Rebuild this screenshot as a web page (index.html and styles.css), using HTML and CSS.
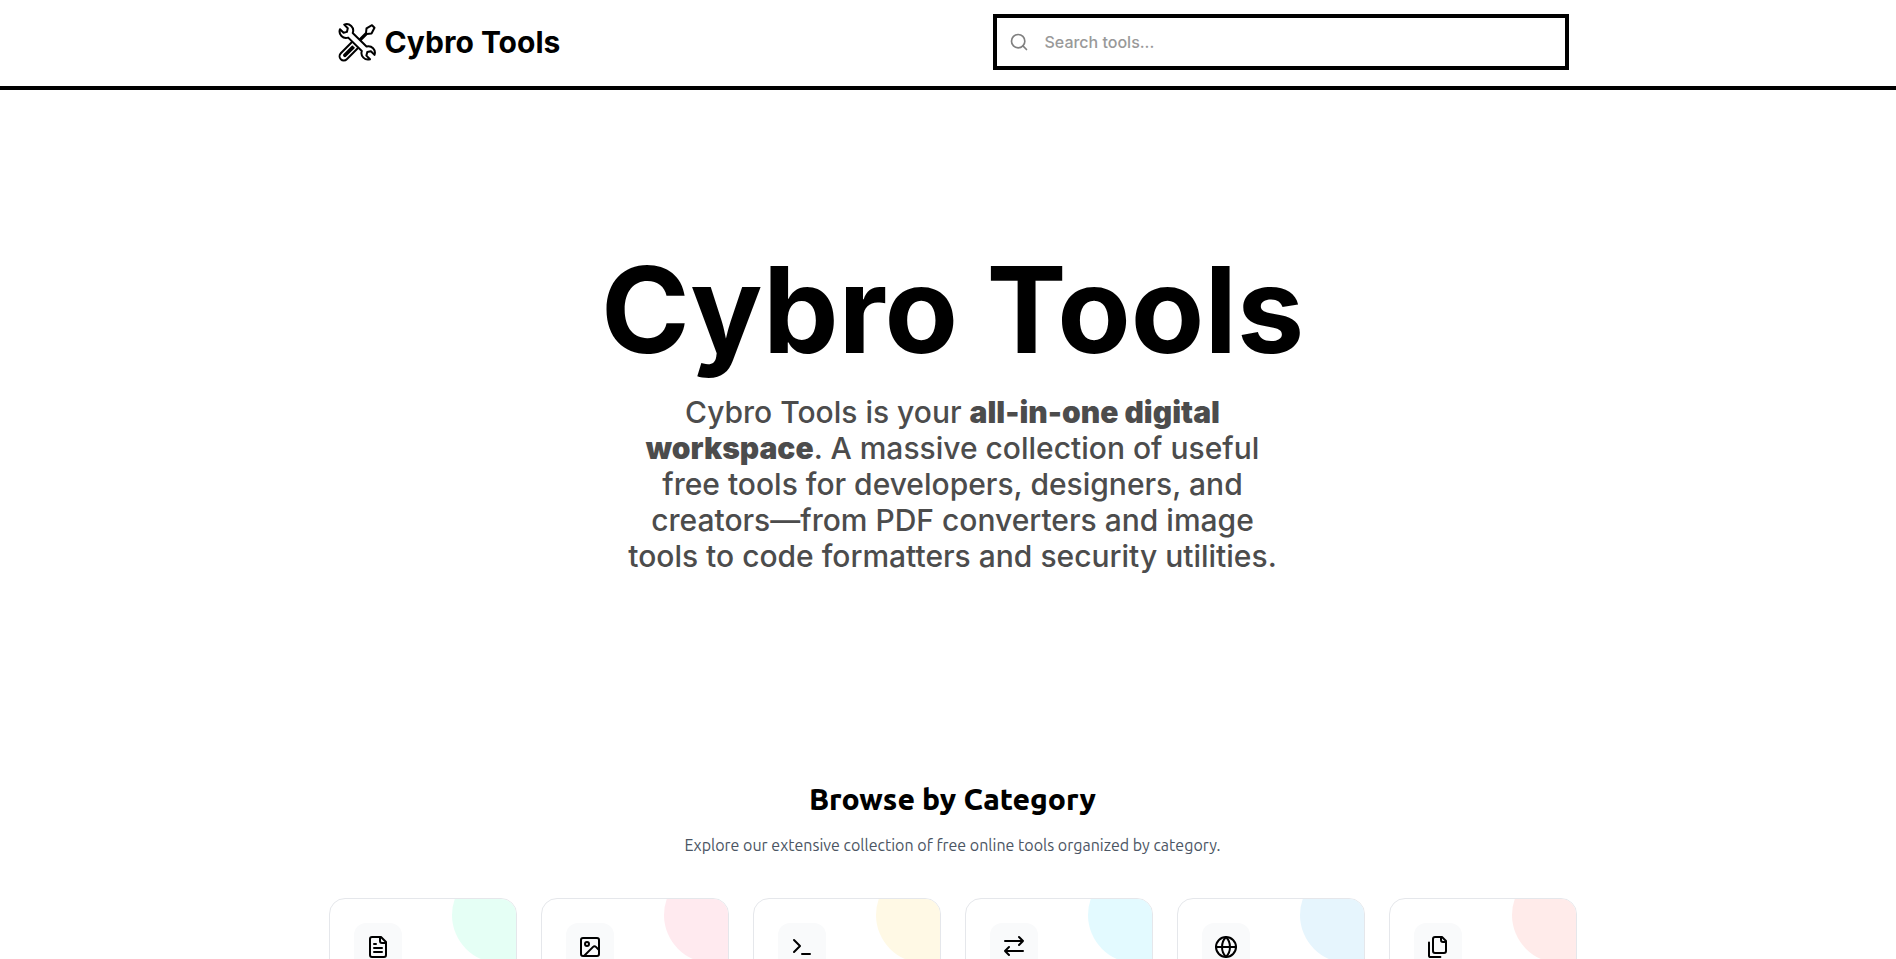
FILE: index.html
```html
<!DOCTYPE html>
<html lang="en">
<head>
<meta charset="utf-8">
<title>Cybro Tools</title>
<link rel="stylesheet" href="styles.css">
</head>
<body>
<header class="header">
  <div class="header-inner">
    <a class="brand" href="#">
      <svg class="brand-logo" viewBox="0 0 40 40" aria-hidden="true">
        <path d="M22.500 17.500 29 11l.5-4.600 5.500-3.200 2.500 2.500-3 5.800-4.700.5-6.500 6.500"/>
        <path d="M14.500 20.500 3.800 31.200a4.300 4.300 0 0 0 0 6 4.300 4.300 0 0 0 6 0L20.500 26.500"/>
        <path d="M15.500 24.500 7.300 32.700a.8.8 0 0 0 1.200 1.200L16.700 25.700"/>
        <path class="wrench" d="M7.200 2.600a6.500 6.500 0 0 1 8.500 8.400L29.500 24.500a6.500 6.500 0 0 1 8 8.400l-3.600-3.600-3.600.8-.9 3.500 3.600 3.600a6.500 6.500 0 0 1-8.200-8.200L11.200 15.600A6.500 6.500 0 0 1 3 7.200l3.600 3.600 3.300-.9.900-3.600z"/>
      </svg>
      <span>Cybro Tools</span>
    </a>
    <label class="search">
      <svg class="search-icon" viewBox="0 0 24 24" aria-hidden="true"><circle cx="11" cy="11" r="8"/><path d="m21 21-4.300-4.300"/></svg>
      <input class="search-input" type="text" placeholder="Search tools..." aria-label="Search tools">
    </label>
  </div>
</header>
<main class="main">
  <section class="hero">
    <h1 class="hero-title">Cybro Tools</h1>
    <p class="hero-text">Cybro Tools is your <strong>all-in-one digital workspace</strong>. A massive collection of useful free tools for developers, designers, and creators—from PDF converters and image tools to code formatters and security utilities.</p>
  </section>
  <section class="categories">
    <h2 class="categories-title">Browse by Category</h2>
    <p class="categories-text">Explore our extensive collection of free online tools organized by category.</p>
    <div class="grid">
      <a class="card card-green" href="#"><span class="card-icon"><svg viewBox="0 0 24 24"><path d="M15 2H6a2 2 0 0 0-2 2v16a2 2 0 0 0 2 2h12a2 2 0 0 0 2-2V7Z"/><path d="M14 2v4a2 2 0 0 0 2 2h4"/><path d="M10 9H8M16 13H8M16 17H8"/></svg></span></a>
      <a class="card card-pink" href="#"><span class="card-icon"><svg viewBox="0 0 24 24"><rect x="3" y="3" width="18" height="18" rx="2"/><circle cx="9" cy="9" r="2"/><path d="m21 15-3.086-3.086a2 2 0 0 0-2.828 0L6 21"/></svg></span></a>
      <a class="card card-yellow" href="#"><span class="card-icon"><svg viewBox="0 0 24 24"><path d="m4 17 6-6-6-6M12 19h8"/></svg></span></a>
      <a class="card card-cyan" href="#"><span class="card-icon"><svg viewBox="0 0 24 24"><path d="m17 2 4 4-4 4M3 6h18M7 20l-4-4 4-4M21 16H3"/></svg></span></a>
      <a class="card card-blue" href="#"><span class="card-icon"><svg viewBox="0 0 24 24"><circle cx="12" cy="12" r="10"/><path d="M12 2a14.500 14.500 0 0 0 0 20 14.500 14.500 0 0 0 0-20M2 12h20"/></svg></span></a>
      <a class="card card-red" href="#"><span class="card-icon"><svg viewBox="0 0 24 24"><path d="M20 7h-3a2 2 0 0 1-2-2V2"/><path d="M9 18a2 2 0 0 1-2-2V4a2 2 0 0 1 2-2h7l4 4v10a2 2 0 0 1-2 2Z"/><path d="M3 7.600v12.800A1.600 1.600 0 0 0 4.600 22h9.800"/></svg></span></a>
    </div>
  </section>
</main>
</body>
</html>
```
FILE: styles.css
```css
* { box-sizing: border-box; margin: 0; }

body {
  height: 100vh;
  overflow: hidden;
  background: #fff;
  color: #000;
  font-family: Inter, "Liberation Sans", sans-serif;
}

svg {
  fill: none;
  stroke: currentColor;
  stroke-width: 2;
  stroke-linecap: round;
  stroke-linejoin: round;
}

a { color: inherit; text-decoration: none; }

.header {
  padding: 14px 0 16px 9px;
  border-bottom: 4px solid #000;
}

.header-inner {
  display: flex;
  align-items: center;
  justify-content: space-between;
  max-width: 1280px;
  margin: 0 auto;
  padding: 0 24px;
}

.brand {
  display: flex;
  align-items: center;
  gap: 8px;
  font-size: 30px;
  line-height: 36px;
  font-weight: 700;
}

.brand-logo { width: 40px; height: 40px; }
.wrench { fill: #fff; }

.search {
  display: flex;
  align-items: center;
  gap: 16px;
  width: 576px;
  height: 56px;
  padding: 0 12px;
  border: 4px solid #000;
}

.search-icon { width: 20px; height: 20px; color: #808080; }

.search-input {
  flex: 1;
  padding: 0;
  border: 0;
  outline: 0;
  background: transparent;
  font: 500 16px/24px Inter, "Liberation Sans", sans-serif;
}

.search-input::placeholder { color: #999; }

.main { padding-left: 9px; }

.hero {
  max-width: 1280px;
  margin: 0 auto;
  padding: 160px 16px;
  text-align: center;
}

.hero-title {
  margin-bottom: 24px;
  font-size: 120px;
  line-height: 120px;
  font-weight: 700;
}

.hero-text {
  max-width: 672px;
  margin: 0 auto;
  color: #4c4c4c;
  font-size: 30px;
  line-height: 36px;
  font-weight: 500;
}

.hero-text strong { font-weight: 900; }

.categories {
  max-width: 1280px;
  margin: 0 auto;
  padding: 47px 16px;
  text-align: center;
  font-family: Ubuntu, "Noto Sans", sans-serif;
}

.categories-title {
  margin-bottom: 16px;
  font-size: 30px;
  line-height: 36px;
  font-weight: 800;
}

.categories-text {
  margin-bottom: 41px;
  color: #4b5563;
  font-size: 16px;
  line-height: 24px;
}

.grid {
  display: grid;
  grid-template-columns: repeat(6, 1fr);
  gap: 24px;
}

.card {
  position: relative;
  overflow: hidden;
  min-height: 180px;
  padding: 24px;
  border: 1px solid #e5e7eb;
  border-radius: 16px;
}

.card::before {
  content: "";
  position: absolute;
  top: -32px;
  right: -32px;
  width: 96px;
  height: 96px;
  border-radius: 50%;
  background: var(--tint);
}

.card-green { --tint: #e5fff5; }
.card-pink { --tint: #ffeaef; }
.card-yellow { --tint: #fff9e5; }
.card-cyan { --tint: #e3faff; }
.card-blue { --tint: #e6f5fd; }
.card-red { --tint: #ffebea; }

.card-icon {
  display: flex;
  align-items: center;
  justify-content: center;
  width: 48px;
  height: 48px;
  border-radius: 12px;
  background: #f9fafb;
}

.card-icon svg { width: 24px; height: 24px; }
```
